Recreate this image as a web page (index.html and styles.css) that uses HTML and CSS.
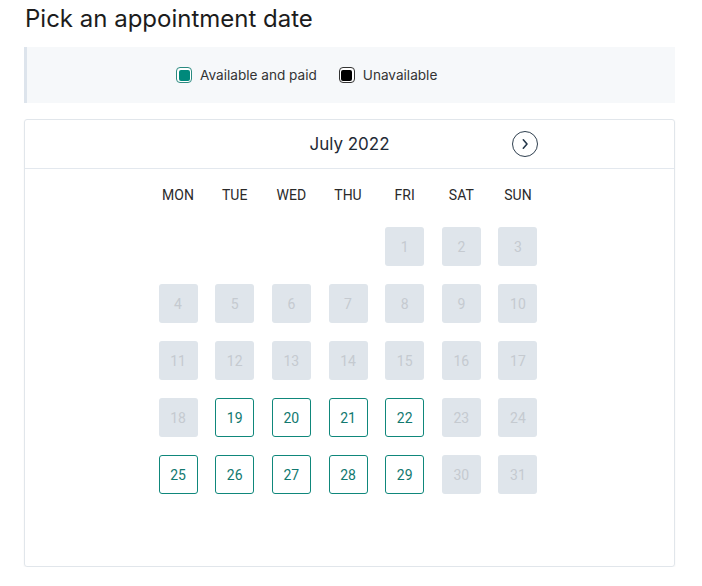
FILE: index.html
```html
<!DOCTYPE html>
<html>
<head>
<meta charset="utf-8">
<link rel="stylesheet" href="styles.css">
</head>
<body>
<div class="page">
  <h1 class="title">Pick an appointment date</h1>
  <div class="legend">
    <span class="swatch swatch-paid"><span></span></span>
    <span class="legend-text">Available and paid</span>
    <span class="swatch swatch-off"><span></span></span>
    <span class="legend-text">Unavailable</span>
  </div>
  <div class="card">
    <div class="card-head">
      <div></div>
      <div class="month">July 2022</div>
      <button class="next" aria-label="Next month">
        <svg width="10" height="12" viewBox="0 0 10 12"><path d="M3.3 1.8 L7 6 L3.3 10.2" fill="none" stroke="#24374a" stroke-width="1.6" stroke-linecap="round" stroke-linejoin="round"/></svg>
      </button>
    </div>
    <div class="cal">
      <div class="wd">MON</div><div class="wd">TUE</div><div class="wd">WED</div><div class="wd">THU</div><div class="wd">FRI</div><div class="wd">SAT</div><div class="wd">SUN</div>
      <div></div><div></div><div></div><div></div>
      <div class="day off">1</div><div class="day off">2</div><div class="day off">3</div>
      <div class="day off">4</div><div class="day off">5</div><div class="day off">6</div><div class="day off">7</div><div class="day off">8</div><div class="day off">9</div><div class="day off">10</div>
      <div class="day off">11</div><div class="day off">12</div><div class="day off">13</div><div class="day off">14</div><div class="day off">15</div><div class="day off">16</div><div class="day off">17</div>
      <div class="day off">18</div><div class="day on">19</div><div class="day on">20</div><div class="day on">21</div><div class="day on">22</div><div class="day off">23</div><div class="day off">24</div>
      <div class="day on">25</div><div class="day on">26</div><div class="day on">27</div><div class="day on">28</div><div class="day on">29</div><div class="day off">30</div><div class="day off">31</div>
    </div>
  </div>
</div>
</body>
</html>
```

FILE: styles.css
```css
html, body {
  margin: 0;
  padding: 0;
  background: #ffffff;
}
.page {
  width: 651px;
  margin-left: 24px;
  font-family: Inter, "Liberation Sans", sans-serif;
  color: #222;
}
.title {
  margin: 0 0 12px 1px;
  padding-top: 2px;
  font-size: 24px;
  line-height: 33px;
  font-weight: 400;
  color: #1c1c1c;
}
.legend {
  height: 56px;
  box-sizing: border-box;
  background: #f6f8fa;
  border-left: 3px solid #dde4ec;
  display: flex;
  align-items: center;
  padding-left: 149px;
  font-size: 13.6px;
  color: #333;
}
.swatch {
  width: 16px;
  height: 16px;
  box-sizing: border-box;
  border-radius: 4px;
  padding: 1.5px;
  background: #fff;
  margin-right: 8px;
}
.swatch span {
  display: block;
  width: 100%;
  height: 100%;
  border-radius: 2px;
}
.swatch-paid { border: 1px solid #2a8a80; }
.swatch-paid span { background: #00897b; }
.swatch-off { border: 1px solid #333; margin-left: 22px; }
.swatch-off span { background: #000; }
.legend-text { line-height: 16px; }
.card {
  margin-top: 16px;
  border: 1px solid #e1e6eb;
  border-radius: 3px;
  box-shadow: 0 1px 2px rgba(0,0,0,0.06);
  height: 448px;
  box-sizing: border-box;
}
.card-head {
  height: 49px;
  box-sizing: border-box;
  border-bottom: 1px solid #e3e8ee;
  display: grid;
  grid-template-columns: 1fr auto 1fr;
  align-items: center;
}
.month {
  font-size: 17px;
  color: #1f2a36;
}
.next {
  justify-self: end;
  margin-right: 136px;
  width: 26px;
  height: 26px;
  border-radius: 50%;
  border: 1.3px solid #2f3f4f;
  background: #fff;
  padding: 0;
  display: flex;
  align-items: center;
  justify-content: center;
}
.cal {
  display: grid;
  grid-template-columns: repeat(7, 39px);
  column-gap: 17.67px;
  row-gap: 18px;
  justify-content: center;
  padding-top: 16px;
  padding-right: 3px;
  font-family: Roboto, "Liberation Sans", sans-serif;
  font-size: 14px;
}
.wd {
  height: 20px;
  line-height: 20px;
  text-align: center;
  color: #2a2a2a;
  margin: 0 -8px 4px;
}
.day {
  height: 39px;
  box-sizing: border-box;
  border-radius: 3px;
  display: flex;
  align-items: center;
  justify-content: center;
}
.off {
  background: #dfe5eb;
  color: #c5cad0;
}
.on {
  border: 1px solid #0f877b;
  color: #12796f;
  background: #fff;
}
```
